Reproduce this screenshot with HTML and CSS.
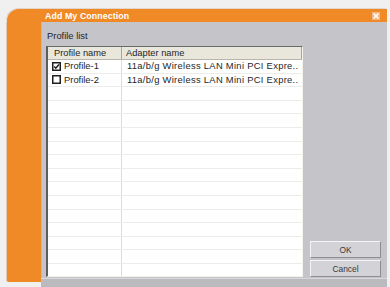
FILE: index.html
```html
<!DOCTYPE html>
<html>
<head>
<meta charset="utf-8">
<link rel="stylesheet" href="styles.css">
</head>
<body>
<div class="window">
  <div class="titlebar">
    <span class="title">Add My Connection</span>
    <span class="close"><svg width="8" height="8" viewBox="0 0 8 8"><path d="M1.5 1.5 L6.5 6.5 M6.5 1.5 L1.5 6.5" stroke="#fff" stroke-width="1.6"/></svg></span>
  </div>
  <div class="body">
    <div class="side"></div>
    <div class="panel">
      <div class="label">Profile list</div>
      <div class="content">
        <div class="list">
          <div class="head">
            <div class="c1">Profile name</div>
            <div class="c2">Adapter name</div>
          </div>
          <div class="rows">
            <div class="row">
              <div class="c1"><span class="box"><svg width="9" height="9" viewBox="0 0 9 9"><rect x="0.75" y="0.75" width="7.5" height="7.5" fill="#fff" stroke="#1e1e1e" stroke-width="1.5"/><path d="M2.2 4.5 L3.8 6.2 L6.9 2.6" fill="none" stroke="#1e1e1e" stroke-width="1.5"/></svg></span>Profile-1</div>
              <div class="c2">11a/b/g Wireless LAN Mini PCI Expre..</div>
            </div>
            <div class="row">
              <div class="c1"><span class="box"><svg width="9" height="9" viewBox="0 0 9 9"><rect x="0.75" y="0.75" width="7.5" height="7.5" fill="#fff" stroke="#1e1e1e" stroke-width="1.5"/></svg></span>Profile-2</div>
              <div class="c2">11a/b/g Wireless LAN Mini PCI Expre..</div>
            </div>
            <div class="row"><div class="c1"></div><div class="c2"></div></div>
            <div class="row"><div class="c1"></div><div class="c2"></div></div>
            <div class="row"><div class="c1"></div><div class="c2"></div></div>
            <div class="row"><div class="c1"></div><div class="c2"></div></div>
            <div class="row"><div class="c1"></div><div class="c2"></div></div>
            <div class="row"><div class="c1"></div><div class="c2"></div></div>
            <div class="row"><div class="c1"></div><div class="c2"></div></div>
            <div class="row"><div class="c1"></div><div class="c2"></div></div>
            <div class="row"><div class="c1"></div><div class="c2"></div></div>
            <div class="row"><div class="c1"></div><div class="c2"></div></div>
            <div class="row"><div class="c1"></div><div class="c2"></div></div>
            <div class="row"><div class="c1"></div><div class="c2"></div></div>
            <div class="row"><div class="c1"></div><div class="c2"></div></div>
            <div class="row"><div class="c1"></div><div class="c2"></div></div>
          </div>
        </div>
        <div class="buttons">
          <button class="btn">OK</button>
          <button class="btn">Cancel</button>
        </div>
      </div>
      <div class="status"></div>
    </div>
  </div>
</div>
</body>
</html>
```
FILE: styles.css
```css
html, body {
  margin: 0;
  padding: 0;
}
body {
  width: 390px;
  height: 287px;
  overflow: hidden;
  background: #f1f0f0;
  font-family: "Liberation Sans", Arial, sans-serif;
}
.window {
  margin: 9px 3px 0 7px;
  width: 380px;
  height: 278px;
  display: flex;
  flex-direction: column;
}
.titlebar {
  height: 13px;
  background: #f08a26;
  border-top-left-radius: 12px;
  box-shadow: -1px -1px 0 #e2d6cc;
  display: flex;
  align-items: center;
  justify-content: space-between;
  padding: 0 7px 0 38px;
}
.title {
  color: #fff;
  font-weight: bold;
  font-size: 8.8px;
  letter-spacing: 0.1px;
}
.close {
  width: 8px;
  height: 8px;
  background: #f4b483;
  display: flex;
}
.body {
  display: flex;
  align-items: flex-start;
  height: 265px;
}
.side {
  width: 35px;
  height: 260px;
  background: #f08a26;
  box-shadow: -1px 0 0 #e2c9b3;
  border-bottom-left-radius: 2px;
}
.panel {
  flex: 1;
  height: 265px;
  background: #c5c4c9;
  display: flex;
  flex-direction: column;
  box-shadow: inset 1px 0 0 #b9b8bd;
}
.label {
  height: 12px;
  line-height: 12px;
  margin: 8px 0 4px 6px;
  font-size: 9.4px;
  color: #262626;
}
.content {
  display: flex;
  height: 231px;
  padding-left: 5px;
}
.list {
  width: 254px;
  height: 229px;
  background: #fff;
  border-left: 2px solid #5e5e5e;
  border-top: 1px solid #6a6a6a;
  border-right: 1px solid #f3f3ee;
  border-bottom: 1px solid #f3f3ee;
  overflow: hidden;
  display: flex;
  flex-direction: column;
}
.head {
  display: flex;
  height: 12px;
  flex: none;
  background: #e9e6dc;
  border-bottom: 1px solid #b7b5ac;
  font-size: 9.3px;
  color: #262626;
  line-height: 12px;
}
.head .c1 {
  width: 74px;
  padding-left: 6px;
  box-sizing: border-box;
  border-right: 1px solid #a8a69e;
}
.head .c2 {
  flex: 1;
  padding-left: 4px;
  border-right: 1px solid #a8a69e;
}
.rows {
  display: flex;
  flex-direction: column;
}
.row {
  display: flex;
  height: 13.6px;
  flex: none;
  box-sizing: border-box;
  border-bottom: 1px solid #ecece8;
  font-size: 9.4px;
  color: #262626;
  line-height: 12.6px;
}
.row .c1 {
  width: 74px;
  box-sizing: border-box;
  padding-left: 4px;
  border-right: 1px solid #dddcd6;
  display: flex;
  align-items: center;
}
.row .c2 {
  flex: 1;
  padding-left: 5px;
  white-space: nowrap;
  overflow: hidden;
  letter-spacing: 0.3px;
}
.box {
  width: 9px;
  height: 9px;
  margin-right: 3px;
  display: flex;
}
.buttons {
  flex: 1;
  display: flex;
  flex-direction: column;
  justify-content: flex-end;
  gap: 2px;
  padding: 0 6px 0 7px;
}
.btn {
  height: 17px;
  width: 71px;
  margin: 0;
  padding: 0;
  background: #d3d2d6;
  border-top: 1px solid #f4f4f5;
  border-left: 1px solid #f4f4f5;
  border-right: 1px solid #8e8d92;
  border-bottom: 1px solid #8e8d92;
  font-family: "Liberation Sans", Arial, sans-serif;
  font-size: 8.4px;
  color: #3a3a3a;
}
.status {
  margin-top: 1px;
  flex: 1;
  background: #bbbabf;
  border-top: 1px solid #d8d7da;
}
```
